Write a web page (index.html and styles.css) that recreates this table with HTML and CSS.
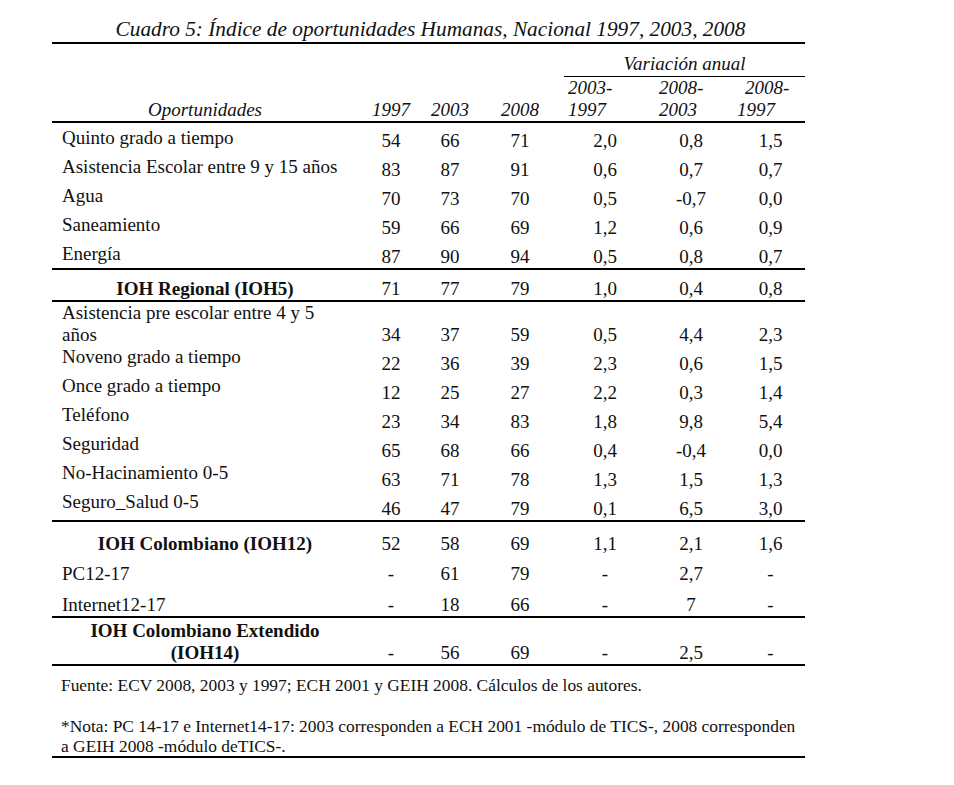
FILE: index.html
```html
<!DOCTYPE html>
<html lang="es">
<head>
<meta charset="utf-8">
<title>Cuadro 5</title>
<link rel="stylesheet" href="styles.css">
</head>
<body>
<div class="doc">
  <div class="title">Cuadro 5: Índice de oportunidades Humanas, Nacional 1997, 2003, 2008</div>
  <table class="tbl">
    <colgroup>
      <col class="c-lab"><col class="c-a"><col class="c-b"><col class="c-c"><col class="c-d"><col class="c-e"><col class="c-f">
    </colgroup>
    <thead>
      <tr class="h1">
        <th></th><th></th><th></th><th></th>
        <th colspan="3" class="var">Variación anual</th>
      </tr>
      <tr class="h2">
        <th class="opp">Oportunidades</th>
        <th>1997</th><th>2003</th><th>2008</th>
        <th class="vh"><span class="l p4">2003-</span><span class="l p4">1997</span></th>
        <th class="vh"><span class="l p13">2008-</span><span class="l p13">2003</span></th>
        <th class="vh"><span class="l p9">2008-</span><span class="l p1">1997</span></th>
      </tr>
    </thead>
    <tbody class="g1">
      <tr><td class="lab">Quinto grado a tiempo</td><td>54</td><td>66</td><td>71</td><td>2,0</td><td>0,8</td><td>1,5</td></tr>
      <tr><td class="lab">Asistencia Escolar entre 9 y 15 años</td><td>83</td><td>87</td><td>91</td><td>0,6</td><td>0,7</td><td>0,7</td></tr>
      <tr><td class="lab">Agua</td><td>70</td><td>73</td><td>70</td><td>0,5</td><td>-0,7</td><td>0,0</td></tr>
      <tr><td class="lab">Saneamiento</td><td>59</td><td>66</td><td>69</td><td>1,2</td><td>0,6</td><td>0,9</td></tr>
      <tr class="end"><td class="lab">Energía</td><td>87</td><td>90</td><td>94</td><td>0,5</td><td>0,8</td><td>0,7</td></tr>
    </tbody>
    <tbody class="sum">
      <tr class="end"><td class="tot">IOH Regional (IOH5)</td><td>71</td><td>77</td><td>79</td><td>1,0</td><td>0,4</td><td>0,8</td></tr>
    </tbody>
    <tbody class="g2">
      <tr class="tall"><td class="lab">Asistencia pre escolar entre 4 y 5<br>años</td><td>34</td><td>37</td><td>59</td><td>0,5</td><td>4,4</td><td>2,3</td></tr>
      <tr><td class="lab">Noveno grado a tiempo</td><td>22</td><td>36</td><td>39</td><td>2,3</td><td>0,6</td><td>1,5</td></tr>
      <tr><td class="lab">Once grado a tiempo</td><td>12</td><td>25</td><td>27</td><td>2,2</td><td>0,3</td><td>1,4</td></tr>
      <tr><td class="lab">Teléfono</td><td>23</td><td>34</td><td>83</td><td>1,8</td><td>9,8</td><td>5,4</td></tr>
      <tr><td class="lab">Seguridad</td><td>65</td><td>68</td><td>66</td><td>0,4</td><td>-0,4</td><td>0,0</td></tr>
      <tr><td class="lab">No-Hacinamiento 0-5</td><td>63</td><td>71</td><td>78</td><td>1,3</td><td>1,5</td><td>1,3</td></tr>
      <tr class="end"><td class="lab">Seguro_Salud 0-5</td><td>46</td><td>47</td><td>79</td><td>0,1</td><td>6,5</td><td>3,0</td></tr>
    </tbody>
    <tbody class="g3">
      <tr class="r33"><td class="tot">IOH Colombiano (IOH12)</td><td>52</td><td>58</td><td>69</td><td>1,1</td><td>2,1</td><td>1,6</td></tr>
      <tr><td class="lab">PC12-17</td><td>-</td><td>61</td><td>79</td><td>-</td><td>2,7</td><td>-</td></tr>
      <tr class="end"><td class="lab">Internet12-17</td><td>-</td><td>18</td><td>66</td><td>-</td><td>7</td><td>-</td></tr>
      <tr class="end ext"><td class="tot">IOH Colombiano Extendido<br>(IOH14)</td><td>-</td><td>56</td><td>69</td><td>-</td><td>2,5</td><td>-</td></tr>
    </tbody>
  </table>
  <div class="notes">
    <p class="src">Fuente: ECV 2008, 2003 y 1997; ECH 2001 y GEIH 2008. Cálculos de los autores.</p>
    <p class="nota">*Nota: PC 14-17 e Internet14-17: 2003 corresponden a ECH 2001 -módulo de TICS-, 2008 corresponden<br>a GEIH 2008 -módulo deTICS-.</p>
  </div>
</div>
</body>
</html>
```

FILE: styles.css
```css
html, body {
  margin: 0;
  padding: 0;
  background: #fff;
}

body {
  font-family: "Liberation Serif", "Times New Roman", serif;
  color: #111;
}

.doc {
  width: 753px;
  margin-left: 52px;
}

.title {
  height: 42px;
  box-sizing: border-box;
  display: flex;
  align-items: flex-end;
  justify-content: center;
  padding-bottom: 2px;
  padding-left: 4px;
  font-style: italic;
  font-size: 21.3px;
  line-height: 22px;
}

.tbl {
  width: 753px;
  table-layout: fixed;
  border-collapse: separate;
  border-spacing: 0;
  border-top: 2px solid #000;
  font-size: 19px;
  line-height: 22px;
}

.c-lab { width: 306px; }
.c-a { width: 66px; }
.c-b { width: 52px; }
.c-c { width: 88px; }
.c-d { width: 82px; }
.c-e { width: 90px; }
.c-f { width: 69px; }

th, td {
  padding: 0;
  text-align: center;
  vertical-align: bottom;
  white-space: nowrap;
}

th {
  font-style: italic;
  font-weight: normal;
}

.h1 { height: 33px; }

.h1 .var {
  border-bottom: 1px solid #000;
  padding-bottom: 1px;
}

.h2 { height: 46px; }

.h2 th {
  border-bottom: 2px solid #000;
}

.vh {
  text-align: left;
}

.vh .l { display: block; }
.p1 { padding-left: 1px; }
.p4 { padding-left: 4px; }
.p9 { padding-left: 9px; }
.p13 { padding-left: 13px; }

tbody tr { height: 29px; }

.end td {
  border-bottom: 2px solid #000;
}

.g1 tr.end { height: 31px; }

td.lab {
  text-align: left;
  padding-left: 10px;
  vertical-align: top;
}

.g1 td.lab { padding-top: 4px; }

td.tot {
  font-weight: bold;
  text-align: center;
}

.sum tr { height: 32px; }

.g2 tr.tall { height: 44px; }
.g2 tr.end { height: 31px; }

.g3 tr { height: 30px; }
.g3 tr.r33 { height: 33px; }
.g3 tr.end { height: 33px; }
.g3 tr.ext { height: 48px; }
.g3 td.lab { vertical-align: bottom; }

.notes {
  border-bottom: 2px solid #000;
  font-size: 17.4px;
  line-height: 20px;
  padding-left: 9px;
}

.notes p {
  margin: 0;
}

.src {
  padding-top: 9px;
}

.nota {
  padding-top: 21px;
}
```
